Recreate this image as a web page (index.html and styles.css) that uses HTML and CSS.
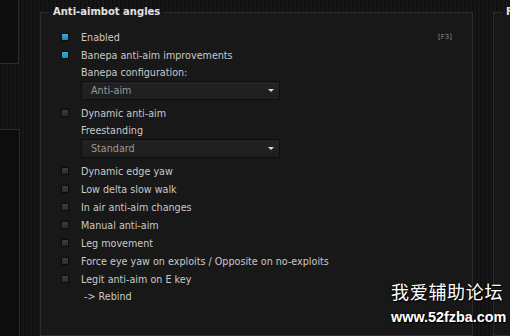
FILE: index.html
```html
<!DOCTYPE html>
<html lang="en">
<head>
    <meta charset="UTF-8">
    <meta name="viewport" content="width=device-width, initial-scale=1.0">
    <title>Anti-aimbot angles</title>
    <link rel="stylesheet" href="styles.css">
</head>
<body>

<div class="screen">
    <!-- left tab column -->
    <div class="side">
        <div class="side-box top"></div>
        <div class="side-box bottom"></div>
    </div>

    <!-- main group -->
    <fieldset class="group">
        <legend>Anti-aimbot angles</legend>

        <div class="row"><span class="check on"></span><span class="text">Enabled</span><span class="key">[F3]</span></div>
        <div class="row"><span class="check on"></span><span class="text">Banepa anti-aim improvements</span></div>
        <div class="label">Banepa configuration:</div>
        <div class="select"><span>Anti-aim</span><span class="arrow"></span></div>

        <div class="row"><span class="check"></span><span class="text">Dynamic anti-aim</span></div>
        <div class="label">Freestanding</div>
        <div class="select"><span>Standard</span><span class="arrow"></span></div>

        <div class="row"><span class="check"></span><span class="text">Dynamic edge yaw</span></div>
        <div class="row"><span class="check"></span><span class="text">Low delta slow walk</span></div>
        <div class="row"><span class="check"></span><span class="text">In air anti-aim changes</span></div>
        <div class="row"><span class="check"></span><span class="text">Manual anti-aim</span></div>
        <div class="row"><span class="check"></span><span class="text">Leg movement</span></div>
        <div class="row"><span class="check"></span><span class="text">Force eye yaw on exploits / Opposite on no-exploits</span></div>
        <div class="row"><span class="check"></span><span class="text">Legit anti-aim on E key</span></div>
        <div class="rebind">-&gt; Rebind</div>
    </fieldset>

    <!-- next group, cut off by the window -->
    <fieldset class="group next">
        <legend>Fake lag</legend>
    </fieldset>
</div>

<div class="watermark">
    <div class="wm-cn">我爱辅助论坛</div>
    <div class="wm-url">www.52fzba.com</div>
</div>

</body>
</html>
```

FILE: styles.css
```css
html, body {
    margin: 0;
    padding: 0;
}
body {
    width: 510px;
    height: 336px;
    overflow: hidden;
    position: relative;
    font-family: "DejaVu Sans", sans-serif;
    font-size: 9.6px;
    color: #c9c9c9;
    background: repeating-linear-gradient(90deg, #111111 0, #111111 2px, #171717 2px, #171717 4px);
}
.screen {
    display: flex;
    height: 336px;
}
.side {
    width: 21px;
    flex-shrink: 0;
    display: flex;
    flex-direction: column;
}
.side-box {
    background: #0d0d0d;
    border-right: 1px solid #2a2a2a;
}
.side-box.top {
    height: 63px;
    width: 18px;
    border-bottom: 1px solid #2a2a2a;
}
.side-box.bottom {
    margin-top: 65px;
    flex: 1;
    width: 19px;
    border-top: 1px solid #2a2a2a;
}
.group {
    margin: 6px 0 0 19px;
    padding: 10px 0 0 0;
    width: 431px;
    flex-shrink: 0;
    border: 1px solid #2c2c2c;
    background: #181818;
    min-width: 0;
}
.group legend {
    margin-left: 8px;
    padding: 0 4px;
    font-size: 10px;
    font-weight: bold;
    color: #e2e2e2;
    line-height: 12px;
    white-space: nowrap;
}
.group.next {
    margin-left: 20px;
    width: 120px;
}
.row {
    display: flex;
    align-items: center;
    height: 18px;
    padding-left: 21px;
}
.check {
    width: 6px;
    height: 6px;
    margin-right: 13px;
    background: linear-gradient(#3d3d3d, #2c2c2c);
    box-shadow: 0 0 0 1px #0c0c0c;
}
.check.on {
    background: linear-gradient(#35b0e0, #1c86b4);
}
.text {
    white-space: nowrap;
}
.key {
    margin-left: auto;
    margin-right: 20px;
    font-size: 7px;
    color: #8c8c8c;
}
.label {
    height: 16px;
    line-height: 16px;
    margin-top: 1px;
    padding-left: 40px;
}
.select {
    margin: 0 0 4px 40px;
    width: 188px;
    height: 17px;
    border: 1px solid #0e0e0e;
    background: linear-gradient(#222222, #1e1e1e);
    display: flex;
    align-items: center;
    padding-left: 9px;
    color: #9a9a9a;
}
.select .arrow {
    margin-left: auto;
    margin-right: 5px;
    width: 0;
    height: 0;
    border-left: 3px solid transparent;
    border-right: 3px solid transparent;
    border-top: 3px solid #d8d8d8;
}
.rebind {
    height: 18px;
    line-height: 18px;
    padding-left: 43px;
}
.watermark {
    position: absolute;
    left: 391px;
    top: 278px;
    color: #ffffff;
    text-shadow: 0 0 2px #000, 1px 1px 1px #000;
}
.wm-cn {
    font-family: "Noto Sans CJK SC", sans-serif;
    font-size: 18px;
    line-height: 26px;
    letter-spacing: 0.7px;
}
.wm-url {
    font-family: "Liberation Sans", sans-serif;
    font-weight: bold;
    font-size: 14.4px;
    line-height: 30px;
    margin-top: -2px;
}
```
